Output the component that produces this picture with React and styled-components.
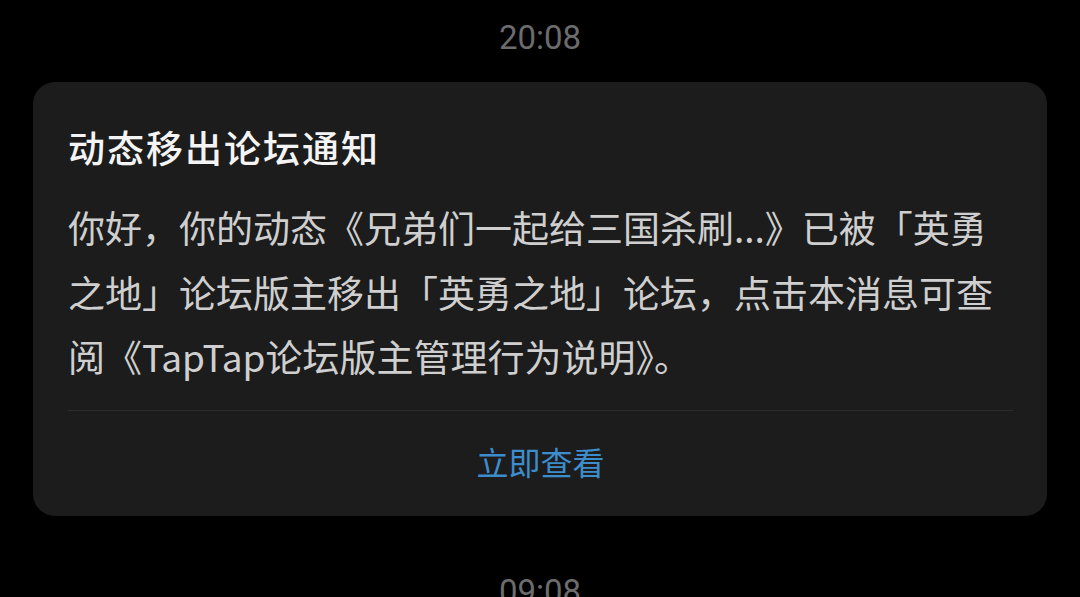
import React from 'react'
import styled, { createGlobalStyle } from 'styled-components'

const GlobalStyle = createGlobalStyle`
  html, body {
    margin: 0;
    padding: 0;
    background: #000;
  }
  body {
    font-family: "Noto Sans CJK SC", "Noto Sans", sans-serif;
    overflow: hidden;
  }
`

const StyledPage = styled.div`
  width: 1080px;
  height: 597px;
  overflow: hidden;
  display: flex;
  flex-direction: column;
  align-items: center;
  padding-top: 18px;
  box-sizing: border-box;
`

const StyledTime = styled.div`
  font-family: Roboto, "Noto Sans CJK SC", sans-serif;
  font-size: 33px;
  line-height: 40px;
  color: #6c6c6c;
  margin-bottom: ${({ $gap }) => $gap || 0}px;
`

const StyledCard = styled.div`
  width: 1014px;
  align-self: flex-start;
  margin-left: 33px;
  background: #1c1c1c;
  border-radius: 22px;
  padding: 40px 34px 0 35px;
  box-sizing: border-box;
  margin-bottom: 56px;
`

const StyledTitle = styled.div`
  font-size: 37px;
  line-height: 50px;
  font-weight: 500;
  color: #f4f4f4;
  letter-spacing: 2px;
  margin-bottom: 23px;
`

const StyledBody = styled.div`
  font-size: 37px;
  line-height: 64.5px;
  color: #cfcfcf;
  padding-bottom: 21px;
  border-bottom: 1px solid #2c2c2c;
`

const StyledLine = styled.span`
  display: block;
  white-space: nowrap;
`

const StyledAction = styled.div`
  display: flex;
  justify-content: center;
  align-items: center;
  height: 105px;
  padding-bottom: 4px;
  box-sizing: border-box;
  font-size: 32px;
  color: #3d8ccc;
`

const lines = [
  '你好，你的动态《兄弟们一起给三国杀刷...》已被「英勇',
  '之地」论坛版主移出「英勇之地」论坛，点击本消息可查',
  '阅《TapTap论坛版主管理行为说明》。'
]

const NoticeCard = () => {
  return (
    <StyledCard>
      <StyledTitle>动态移出论坛通知</StyledTitle>
      <StyledBody>
        {lines.map((line, idx) => <StyledLine key={idx}>{line}</StyledLine>)}
      </StyledBody>
      <StyledAction>立即查看</StyledAction>
    </StyledCard>
  )
}

const App = () => {
  return (
    <>
      <GlobalStyle />
      <StyledPage>
        <StyledTime $gap={24}>20:08</StyledTime>
        <NoticeCard />
        <StyledTime>09:08</StyledTime>
      </StyledPage>
    </>
  )
}

export default App
